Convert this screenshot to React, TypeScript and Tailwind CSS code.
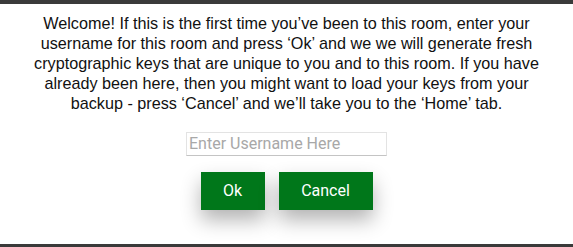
import React from 'react';

const lines = [
  'Welcome! If this is the first time you’ve been to this room, enter your',
  'username for this room and press ‘Ok’ and we we will generate fresh',
  'cryptographic keys that are unique to you and to this room. If you have',
  'already been here, then you might want to load your keys from your',
  'backup - press ‘Cancel’ and we’ll take you to the ‘Home’ tab.',
];

const App = () => {
  return (
    <div className="w-[573px] h-[247px] flex flex-col bg-white overflow-hidden">
      <div className="h-[4px] bg-[#3a3a3a]" />
      <div className="flex-1 flex flex-col items-center pt-[9px]">
        {/* Welcome message */}
        <p
          className="text-center text-[16.2px] leading-[20px] text-[#111] whitespace-nowrap"
          style={{ fontFamily: '"Liberation Sans", Arial, sans-serif' }}
        >
          {lines.map((l) => (
            <span key={l} className="block">{l}</span>
          ))}
        </p>

        <input
          type="text"
          placeholder="Enter Username Here"
          className="mt-[19px] w-[201px] h-[24px] px-[2px] border border-[#e3e3e3] border-b-[#c4c4c4] text-[16px] outline-none placeholder-[#a8a8a8]"
          style={{ fontFamily: 'Roboto, sans-serif' }}
        />

        <div className="flex gap-[14px] mt-[16px]" style={{ fontFamily: 'Roboto, sans-serif' }}>
          <button className="w-[64px] h-[38px] bg-[#00771a] text-white text-[16px] shadow-[0_10px_20px_rgba(0,0,0,0.3)]">
            Ok
          </button>
          <button className="w-[94px] h-[38px] bg-[#00771a] text-white text-[16px] shadow-[0_10px_20px_rgba(0,0,0,0.3)]">
            Cancel
          </button>
        </div>
      </div>
      <div className="h-[3px] bg-[#3a3a3a]" />
    </div>
  );
};

export default App;
